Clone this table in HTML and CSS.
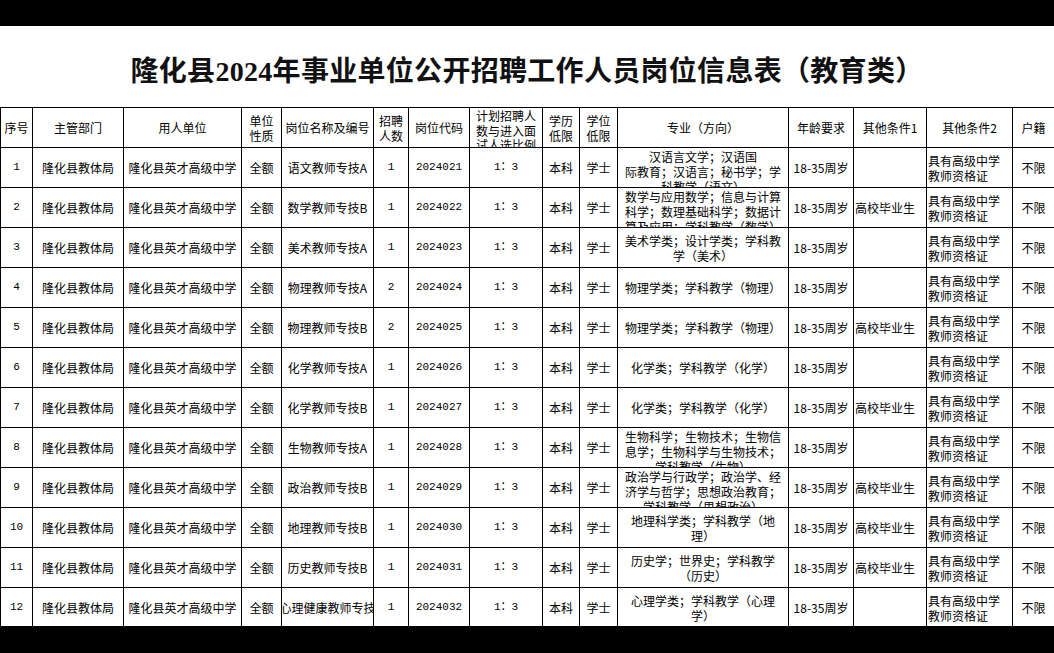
FILE: index.html
```html
<!DOCTYPE html>
<html lang="zh-CN">
<head>
<meta charset="utf-8">
<title>隆化县2024年事业单位公开招聘工作人员岗位信息表（教育类）</title>
<link rel="stylesheet" href="styles.css">
</head>
<body>
<div class="page">
  <div class="sheet">
    <h1 class="title">隆化县2024年事业单位公开招聘工作人员岗位信息表（教育类）</h1>
    <table class="grid">
      <colgroup>
        <col class="w1"><col class="w2"><col class="w3"><col class="w4"><col class="w5">
        <col class="w6"><col class="w7"><col class="w8"><col class="w9"><col class="w10">
        <col class="w11"><col class="w12"><col class="w13"><col class="w14"><col class="w15">
      </colgroup>
      <tr>
        <td><div class="c">序号</div></td>
        <td><div class="c">主管部门</div></td>
        <td><div class="c">用人单位</div></td>
        <td><div class="c">单位<br>性质</div></td>
        <td><div class="c">岗位名称及编号</div></td>
        <td><div class="c">招聘<br>人数</div></td>
        <td><div class="c">岗位代码</div></td>
        <td><div class="c t tight">计划招聘人<br>数与进入面<br>试人选比例</div></td>
        <td><div class="c">学历<br>低限</div></td>
        <td><div class="c">学位<br>低限</div></td>
        <td><div class="c">专业（方向）</div></td>
        <td><div class="c">年龄要求</div></td>
        <td><div class="c">其他条件1</div></td>
        <td><div class="c">其他条件2</div></td>
        <td><div class="c">户籍</div></td>
      </tr>
      <tr>
        <td><div class="c n">1</div></td>
        <td><div class="c">隆化县教体局</div></td>
        <td><div class="c">隆化县英才高级中学</div></td>
        <td><div class="c">全额</div></td>
        <td><div class="c">语文教师专技A</div></td>
        <td><div class="c n">1</div></td>
        <td><div class="c n">2024021</div></td>
        <td><div class="c n">1：3</div></td>
        <td><div class="c">本科</div></td>
        <td><div class="c">学士</div></td>
        <td><div class="c t">汉语言文学；汉语国<br>际教育；汉语言；秘书学；学<br>科教学（语文）</div></td>
        <td><div class="c">18-35周岁</div></td>
        <td><div class="c l"></div></td>
        <td><div class="c l">具有高级中学<br>教师资格证</div></td>
        <td><div class="c">不限</div></td>
      </tr>
      <tr>
        <td><div class="c n">2</div></td>
        <td><div class="c">隆化县教体局</div></td>
        <td><div class="c">隆化县英才高级中学</div></td>
        <td><div class="c">全额</div></td>
        <td><div class="c">数学教师专技B</div></td>
        <td><div class="c n">1</div></td>
        <td><div class="c n">2024022</div></td>
        <td><div class="c n">1：3</div></td>
        <td><div class="c">本科</div></td>
        <td><div class="c">学士</div></td>
        <td><div class="c t">数学与应用数学；信息与计算<br>科学；数理基础科学；数据计<br>算及应用；学科教学（数学）</div></td>
        <td><div class="c">18-35周岁</div></td>
        <td><div class="c l">高校毕业生</div></td>
        <td><div class="c l">具有高级中学<br>教师资格证</div></td>
        <td><div class="c">不限</div></td>
      </tr>
      <tr>
        <td><div class="c n">3</div></td>
        <td><div class="c">隆化县教体局</div></td>
        <td><div class="c">隆化县英才高级中学</div></td>
        <td><div class="c">全额</div></td>
        <td><div class="c">美术教师专技A</div></td>
        <td><div class="c n">1</div></td>
        <td><div class="c n">2024023</div></td>
        <td><div class="c n">1：3</div></td>
        <td><div class="c">本科</div></td>
        <td><div class="c">学士</div></td>
        <td><div class="c">美术学类；设计学类；学科教<br>学（美术）</div></td>
        <td><div class="c">18-35周岁</div></td>
        <td><div class="c l"></div></td>
        <td><div class="c l">具有高级中学<br>教师资格证</div></td>
        <td><div class="c">不限</div></td>
      </tr>
      <tr>
        <td><div class="c n">4</div></td>
        <td><div class="c">隆化县教体局</div></td>
        <td><div class="c">隆化县英才高级中学</div></td>
        <td><div class="c">全额</div></td>
        <td><div class="c">物理教师专技A</div></td>
        <td><div class="c n">2</div></td>
        <td><div class="c n">2024024</div></td>
        <td><div class="c n">1：3</div></td>
        <td><div class="c">本科</div></td>
        <td><div class="c">学士</div></td>
        <td><div class="c">物理学类；学科教学（物理）</div></td>
        <td><div class="c">18-35周岁</div></td>
        <td><div class="c l"></div></td>
        <td><div class="c l">具有高级中学<br>教师资格证</div></td>
        <td><div class="c">不限</div></td>
      </tr>
      <tr>
        <td><div class="c n">5</div></td>
        <td><div class="c">隆化县教体局</div></td>
        <td><div class="c">隆化县英才高级中学</div></td>
        <td><div class="c">全额</div></td>
        <td><div class="c">物理教师专技B</div></td>
        <td><div class="c n">2</div></td>
        <td><div class="c n">2024025</div></td>
        <td><div class="c n">1：3</div></td>
        <td><div class="c">本科</div></td>
        <td><div class="c">学士</div></td>
        <td><div class="c">物理学类；学科教学（物理）</div></td>
        <td><div class="c">18-35周岁</div></td>
        <td><div class="c l">高校毕业生</div></td>
        <td><div class="c l">具有高级中学<br>教师资格证</div></td>
        <td><div class="c">不限</div></td>
      </tr>
      <tr>
        <td><div class="c n">6</div></td>
        <td><div class="c">隆化县教体局</div></td>
        <td><div class="c">隆化县英才高级中学</div></td>
        <td><div class="c">全额</div></td>
        <td><div class="c">化学教师专技A</div></td>
        <td><div class="c n">1</div></td>
        <td><div class="c n">2024026</div></td>
        <td><div class="c n">1：3</div></td>
        <td><div class="c">本科</div></td>
        <td><div class="c">学士</div></td>
        <td><div class="c">化学类；学科教学（化学）</div></td>
        <td><div class="c">18-35周岁</div></td>
        <td><div class="c l"></div></td>
        <td><div class="c l">具有高级中学<br>教师资格证</div></td>
        <td><div class="c">不限</div></td>
      </tr>
      <tr>
        <td><div class="c n">7</div></td>
        <td><div class="c">隆化县教体局</div></td>
        <td><div class="c">隆化县英才高级中学</div></td>
        <td><div class="c">全额</div></td>
        <td><div class="c">化学教师专技B</div></td>
        <td><div class="c n">1</div></td>
        <td><div class="c n">2024027</div></td>
        <td><div class="c n">1：3</div></td>
        <td><div class="c">本科</div></td>
        <td><div class="c">学士</div></td>
        <td><div class="c">化学类；学科教学（化学）</div></td>
        <td><div class="c">18-35周岁</div></td>
        <td><div class="c l">高校毕业生</div></td>
        <td><div class="c l">具有高级中学<br>教师资格证</div></td>
        <td><div class="c">不限</div></td>
      </tr>
      <tr>
        <td><div class="c n">8</div></td>
        <td><div class="c">隆化县教体局</div></td>
        <td><div class="c">隆化县英才高级中学</div></td>
        <td><div class="c">全额</div></td>
        <td><div class="c">生物教师专技A</div></td>
        <td><div class="c n">1</div></td>
        <td><div class="c n">2024028</div></td>
        <td><div class="c n">1：3</div></td>
        <td><div class="c">本科</div></td>
        <td><div class="c">学士</div></td>
        <td><div class="c t">生物科学；生物技术；生物信<br>息学；生物科学与生物技术；<br>学科教学（生物）</div></td>
        <td><div class="c">18-35周岁</div></td>
        <td><div class="c l"></div></td>
        <td><div class="c l">具有高级中学<br>教师资格证</div></td>
        <td><div class="c">不限</div></td>
      </tr>
      <tr>
        <td><div class="c n">9</div></td>
        <td><div class="c">隆化县教体局</div></td>
        <td><div class="c">隆化县英才高级中学</div></td>
        <td><div class="c">全额</div></td>
        <td><div class="c">政治教师专技B</div></td>
        <td><div class="c n">1</div></td>
        <td><div class="c n">2024029</div></td>
        <td><div class="c n">1：3</div></td>
        <td><div class="c">本科</div></td>
        <td><div class="c">学士</div></td>
        <td><div class="c t">政治学与行政学；政治学、经<br>济学与哲学；思想政治教育；<br>学科教学（思想政治）</div></td>
        <td><div class="c">18-35周岁</div></td>
        <td><div class="c l">高校毕业生</div></td>
        <td><div class="c l">具有高级中学<br>教师资格证</div></td>
        <td><div class="c">不限</div></td>
      </tr>
      <tr>
        <td><div class="c n">10</div></td>
        <td><div class="c">隆化县教体局</div></td>
        <td><div class="c">隆化县英才高级中学</div></td>
        <td><div class="c">全额</div></td>
        <td><div class="c">地理教师专技B</div></td>
        <td><div class="c n">1</div></td>
        <td><div class="c n">2024030</div></td>
        <td><div class="c n">1：3</div></td>
        <td><div class="c">本科</div></td>
        <td><div class="c">学士</div></td>
        <td><div class="c">地理科学类；学科教学（地<br>理）</div></td>
        <td><div class="c">18-35周岁</div></td>
        <td><div class="c l">高校毕业生</div></td>
        <td><div class="c l">具有高级中学<br>教师资格证</div></td>
        <td><div class="c">不限</div></td>
      </tr>
      <tr>
        <td><div class="c n">11</div></td>
        <td><div class="c">隆化县教体局</div></td>
        <td><div class="c">隆化县英才高级中学</div></td>
        <td><div class="c">全额</div></td>
        <td><div class="c">历史教师专技B</div></td>
        <td><div class="c n">1</div></td>
        <td><div class="c n">2024031</div></td>
        <td><div class="c n">1：3</div></td>
        <td><div class="c">本科</div></td>
        <td><div class="c">学士</div></td>
        <td><div class="c">历史学；世界史；学科教学<br>（历史）</div></td>
        <td><div class="c">18-35周岁</div></td>
        <td><div class="c l">高校毕业生</div></td>
        <td><div class="c l">具有高级中学<br>教师资格证</div></td>
        <td><div class="c">不限</div></td>
      </tr>
      <tr>
        <td><div class="c n">12</div></td>
        <td><div class="c">隆化县教体局</div></td>
        <td><div class="c">隆化县英才高级中学</div></td>
        <td><div class="c">全额</div></td>
        <td><div class="c nw">心理健康教师专技</div></td>
        <td><div class="c n">1</div></td>
        <td><div class="c n">2024032</div></td>
        <td><div class="c n">1：3</div></td>
        <td><div class="c">本科</div></td>
        <td><div class="c">学士</div></td>
        <td><div class="c">心理学类；学科教学（心理<br>学）</div></td>
        <td><div class="c">18-35周岁</div></td>
        <td><div class="c l"></div></td>
        <td><div class="c l">具有高级中学<br>教师资格证</div></td>
        <td><div class="c">不限</div></td>
      </tr>
    </table>
  </div>
</div>
</body>
</html>
```

FILE: styles.css
```css
html, body {
  margin: 0;
  padding: 0;
  background: #000;
  width: 1054px;
  height: 653px;
  overflow: hidden;
}

.page {
  padding-top: 26px;
}

.sheet {
  background: #fff;
  height: 600px;
  overflow: hidden;
  font-family: "Noto Sans CJK SC", "Noto Sans", sans-serif;
  color: #000;
}

.title {
  margin: 0;
  height: 81px;
  box-sizing: border-box;
  padding-top: 4px;
  display: flex;
  align-items: center;
  justify-content: center;
  font-family: "Liberation Serif", "Noto Sans CJK SC", serif;
  font-weight: bold;
  font-size: 28px;
  letter-spacing: 0.3px;
  color: #111;
}

.grid {
  border-collapse: collapse;
  table-layout: fixed;
  width: 1054px;
  font-size: 12px;
}

.grid td {
  border: 1px solid #000;
  padding: 0;
  vertical-align: middle;
}

.w1 { width: 32px; }
.w2 { width: 91px; }
.w3 { width: 118px; }
.w4 { width: 40px; }
.w5 { width: 92px; }
.w6 { width: 35px; }
.w7 { width: 61px; }
.w8 { width: 73px; }
.w9 { width: 37px; }
.w10 { width: 38px; }
.w11 { width: 171px; }
.w12 { width: 65px; }
.w13 { width: 73px; }
.w14 { width: 86px; }
.w15 { width: 42px; }

.c {
  height: 39px;
  display: flex;
  align-items: center;
  justify-content: center;
  text-align: center;
  overflow: hidden;
  line-height: 15px;
  white-space: nowrap;
}

.c.l {
  justify-content: flex-start;
  text-align: left;
  padding-left: 1px;
}

.c.t {
  align-items: flex-start;
  padding-top: 1px;
  box-sizing: border-box;
}

.c.tight {
  line-height: 14.5px;
}

.c.n {
  font-family: "Liberation Mono", "Noto Sans CJK SC", monospace;
  font-size: 11px;
}
```
